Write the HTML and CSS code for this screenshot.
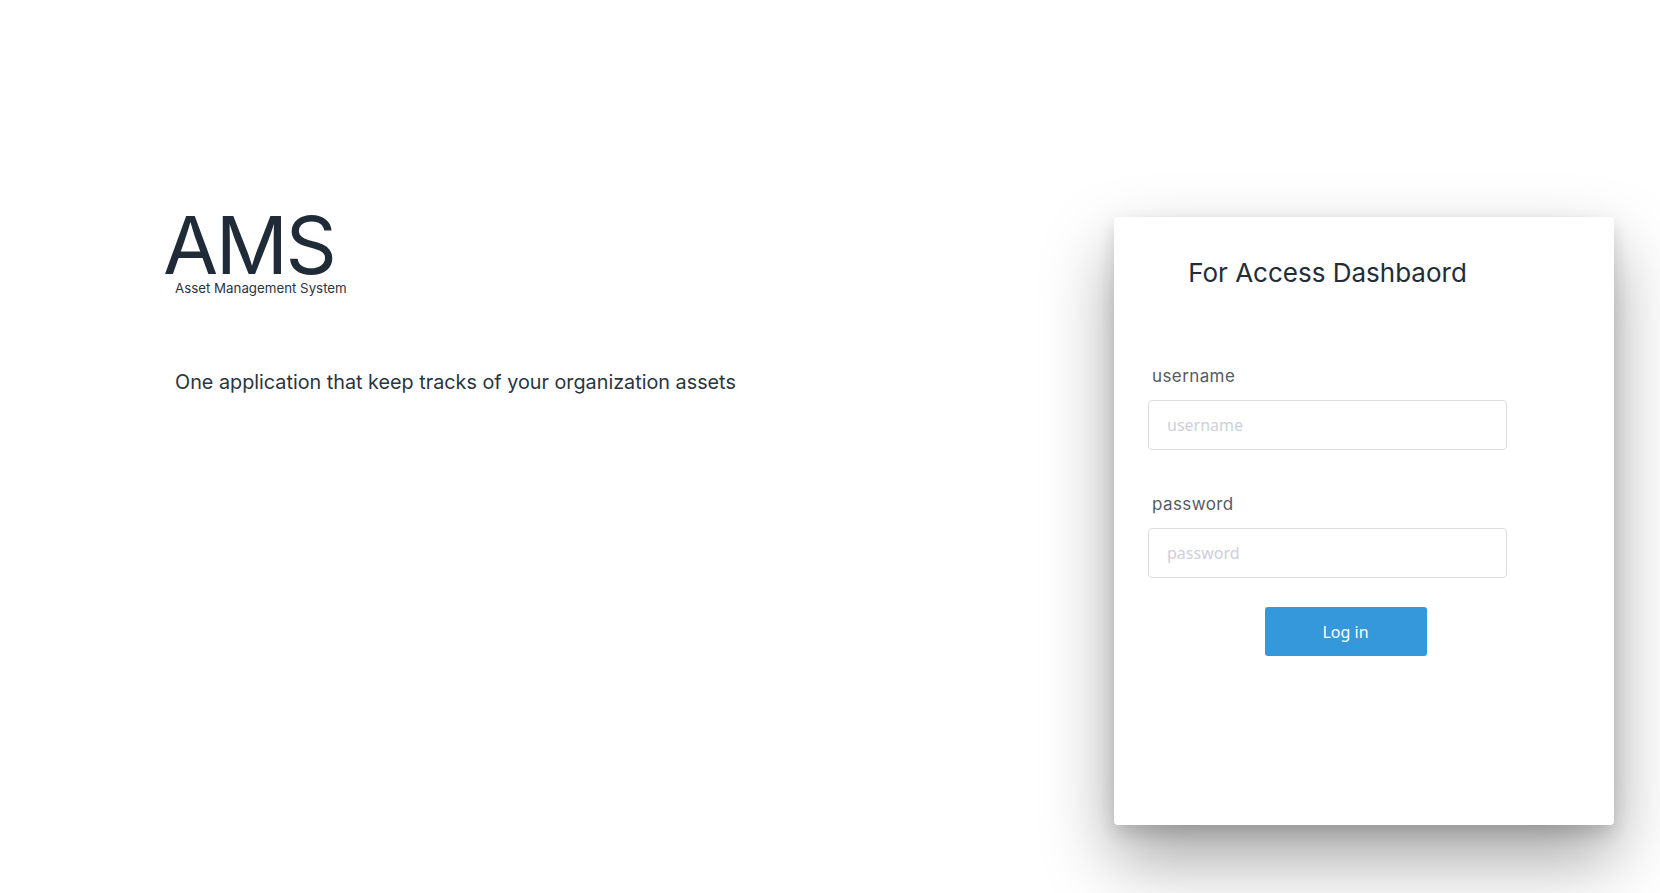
FILE: index.html
```html
<!DOCTYPE html>
<html lang="en">
<head>
<meta charset="utf-8">
<title>AMS - Login</title>
<link rel="stylesheet" href="styles.css">
</head>
<body>
<main class="page">
  <section class="intro">
    <div class="brand">
      <h1 class="brand-title">AMS</h1>
      <p class="brand-sub">Asset Management System</p>
    </div>
    <p class="tagline">One application that keep tracks of your organization assets</p>
  </section>
  <section class="card">
    <div class="card-inner">
      <h2 class="card-title">For Access Dashbaord</h2>
      <form class="form">
        <label class="label" for="username">username</label>
        <input class="input" id="username" type="text" placeholder="username">
        <label class="label label-pw" for="password">password</label>
        <input class="input" id="password" type="password" placeholder="password">
        <div class="actions">
          <button class="btn" type="button">Log in</button>
        </div>
      </form>
    </div>
  </section>
</main>
</body>
</html>
```
FILE: styles.css
```css
* { box-sizing: border-box; }
html, body { margin: 0; padding: 0; background: #fff; }
body {
  font-family: Inter, "DejaVu Sans", sans-serif;
  color: #222d38;
  height: 893px;
  overflow: hidden;
}
.page {
  display: flex;
  justify-content: space-between;
  align-items: flex-start;
  padding: 217px 46px 0 175px;
}
.intro {
  display: flex;
  flex-direction: column;
}
.brand-title {
  margin: -4px 0 0 -12px;
  font-weight: 400;
  font-size: 80px;
  line-height: 64px;
  letter-spacing: -2.5px;
  color: #1f2b37;
}
.brand-sub {
  margin: 3px 0 0 0;
  font-size: 13.3px;
  line-height: 16px;
  color: #2a3540;
}
.tagline {
  margin: 74px 0 0 0;
  font-size: 19.8px;
  line-height: 24px;
  color: #2a3540;
}
.card {
  width: 500px;
  height: 608px;
  background: #fff;
  border-radius: 4px;
  box-shadow: 0 34px 70px rgba(0,0,0,0.36), 0 8px 18px rgba(0,0,0,0.14);
  padding: 0 107px 0 34px;
}
.card-inner {
  display: flex;
  flex-direction: column;
}
.card-title {
  margin: 40px 0 0 0;
  text-align: center;
  font-weight: 400;
  font-size: 26px;
  line-height: 32px;
  color: #222d38;
}
.form {
  display: flex;
  flex-direction: column;
  margin-top: 77px;
}
.label {
  margin-left: 4px;
  font-size: 17px;
  line-height: 20px;
  letter-spacing: 0.4px;
  color: #555b62;
}
.label-pw { margin-top: 44px; }
.input {
  margin-top: 14px;
  height: 50px;
  width: 100%;
  border: 1px solid #dcdde3;
  border-radius: 4px;
  padding: 0 18px;
  font-family: "Noto Sans", sans-serif;
  font-size: 16px;
  color: #333;
  outline: none;
}
.input::placeholder { color: #cdd0da; }
.actions {
  display: flex;
  justify-content: center;
  padding-left: 36px;
  margin-top: 29px;
}
.btn {
  width: 162px;
  height: 49px;
  border: none;
  border-radius: 3px;
  background: #3498db;
  color: #fff;
  font-family: "Noto Sans", sans-serif;
  font-size: 16px;
  cursor: pointer;
}
```
